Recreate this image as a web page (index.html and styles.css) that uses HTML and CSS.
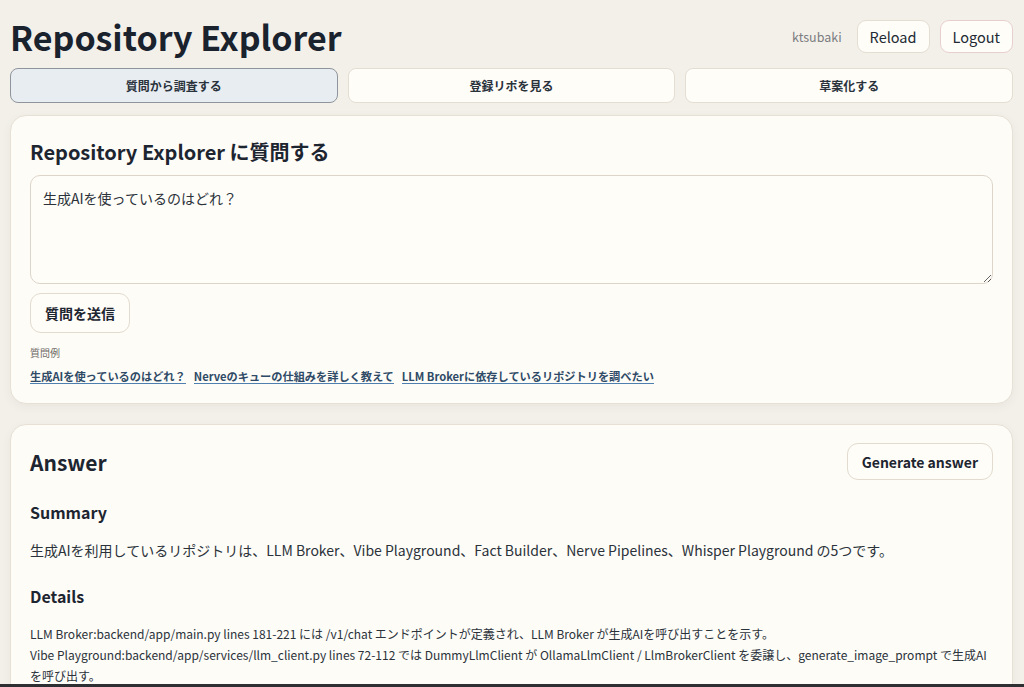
FILE: index.html
```html
<!DOCTYPE html>
<html lang="ja">
<head>
    <meta charset="UTF-8">
    <meta name="viewport" content="width=device-width, initial-scale=1.0">
    <title>Repository Explorer</title>
    <link rel="stylesheet" href="styles.css">
</head>
<body>
    <div class="topbar">
        <h1 class="app-title">Repository Explorer</h1>
        <div class="user-box">
            <span class="user-name">ktsubaki</span>
            <button class="small-button">Reload</button>
            <button class="small-button logout">Logout</button>
        </div>
    </div>

    <div class="tabs">
        <button class="tab active">質問から調査する</button>
        <button class="tab">登録リポを見る</button>
        <button class="tab">草案化する</button>
    </div>

    <div class="card ask-card">
        <h2 class="card-title">Repository Explorer に質問する</h2>
        <textarea class="question-box">生成AIを使っているのはどれ？</textarea>
        <button class="send-button">質問を送信</button>
        <div class="examples-label">質問例</div>
        <div class="examples">
            <a href="#" class="example-link">生成AIを使っているのはどれ？</a>
            <a href="#" class="example-link">Nerveのキューの仕組みを詳しく教えて</a>
            <a href="#" class="example-link">LLM Brokerに依存しているリポジトリを調べたい</a>
        </div>
    </div>

    <div class="card answer-card">
        <div class="answer-head">
            <h2 class="answer-title">Answer</h2>
            <button class="generate-button">Generate answer</button>
        </div>
        <h3 class="section-title">Summary</h3>
        <p class="summary-text">生成AIを利用しているリポジトリは、LLM Broker、Vibe Playground、Fact Builder、Nerve Pipelines、Whisper Playground の5つです。</p>
        <h3 class="section-title details-title">Details</h3>
        <div class="details">
            <p>LLM Broker:backend/app/main.py lines 181-221 には /v1/chat エンドポイントが定義され、LLM Broker が生成AIを呼び出すことを示す。</p>
            <p>Vibe Playground:backend/app/services/llm_client.py lines 72-112 では DummyLlmClient が OllamaLlmClient / LlmBrokerClient を委譲し、generate_image_prompt で生成AIを呼び出す。</p>
        </div>
    </div>

    <div class="window-edge"></div>
</body>
</html>
```

FILE: styles.css
```css
body {
    font-family: "Noto Sans CJK JP", "Noto Sans", sans-serif;
    margin: 0;
    padding: 10px 11px 10px 10px;
    background-color: #f3f0ea;
    color: #1d2530;
    overflow: hidden;
    height: 687px;
    box-sizing: border-box;
}

button {
    font-family: inherit;
    cursor: pointer;
}

.topbar {
    display: flex;
    justify-content: space-between;
    align-items: center;
    height: 52px;
}

.app-title {
    margin: 0;
    font-size: 34px;
    font-weight: 700;
    color: #19222d;
}

.user-box {
    display: flex;
    align-items: center;
    gap: 10px;
    margin-top: 1px;
}

.user-name {
    font-size: 12.5px;
    color: #7b7d80;
    margin-right: 5px;
}

.small-button {
    height: 33px;
    padding: 0 12px;
    font-size: 14.5px;
    color: #222a33;
    background-color: #fffdf8;
    border: 1px solid #e4ddd2;
    border-radius: 9px;
}

.logout {
    border-color: #e8cfcf;
}

.tabs {
    display: grid;
    grid-template-columns: 1fr 1fr 1fr;
    gap: 10px;
    margin-top: 6px;
}

.tab {
    height: 35px;
    font-size: 12px;
    font-weight: 700;
    color: #2a323c;
    background-color: #fffdf8;
    border: 1px solid #e4ddd2;
    border-radius: 8px;
}

.tab.active {
    background-color: #e8edf2;
    border-color: #8e959c;
}

.card {
    background-color: #fdfcf7;
    border: 1px solid #e6e0d5;
    border-radius: 16px;
    box-shadow: 0 3px 10px rgba(80, 70, 50, 0.06);
    padding: 20px 19px 18px;
}

.ask-card {
    margin-top: 12px;
    padding-bottom: 19px;
}

.card-title {
    margin: 1px 0 0;
    font-size: 20px;
    font-weight: 700;
    color: #1d2530;
}

.question-box {
    display: block;
    width: 100%;
    height: 109px;
    box-sizing: border-box;
    margin-top: 9px;
    padding: 12px 12px;
    font-family: inherit;
    font-size: 14px;
    color: #2b323a;
    background-color: #fffdf8;
    border: 1px solid #ddd5c9;
    border-radius: 10px;
    resize: vertical;
}

.send-button {
    margin-top: 9px;
    height: 40px;
    padding: 0 14px;
    font-size: 14px;
    font-weight: 700;
    color: #1d2530;
    background-color: #fffdf8;
    border: 1px solid #e2dbcf;
    border-radius: 11px;
}

.examples-label {
    margin-top: 12px;
    font-size: 10px;
    color: #6e6a64;
}

.examples {
    display: flex;
    gap: 8px;
    margin-top: 9px;
}

.example-link {
    font-size: 11.2px;
    font-weight: 700;
    color: #2f4a66;
    text-decoration: none;
    border-bottom: 1px solid #4f7fae;
    line-height: 14px;
}

.answer-card {
    margin-top: 20px;
    padding-top: 18px;
}

.answer-head {
    display: flex;
    justify-content: space-between;
    align-items: center;
}

.answer-title {
    margin: 0;
    font-size: 21px;
    font-weight: 700;
    color: #1d2530;
}

.generate-button {
    height: 37px;
    padding: 0 14px;
    font-size: 14px;
    font-weight: 700;
    color: #1d2530;
    background-color: #fffdf8;
    border: 1px solid #e2dbcf;
    border-radius: 11px;
}

.section-title {
    margin: 20px 0 0;
    font-size: 16px;
    font-weight: 700;
    color: #1d2530;
}

.details-title {
    margin-top: 24px;
}

.summary-text {
    margin: 16px 0 0;
    font-size: 14px;
    color: #2b323a;
}

.details {
    margin-top: 15px;
    font-size: 12px;
    color: #2b323a;
}

.details p {
    margin: 0;
    line-height: 21px;
}

.window-edge {
    position: fixed;
    left: 0;
    right: 0;
    bottom: 0;
    height: 3px;
    background-color: #2d2f33;
}
```
